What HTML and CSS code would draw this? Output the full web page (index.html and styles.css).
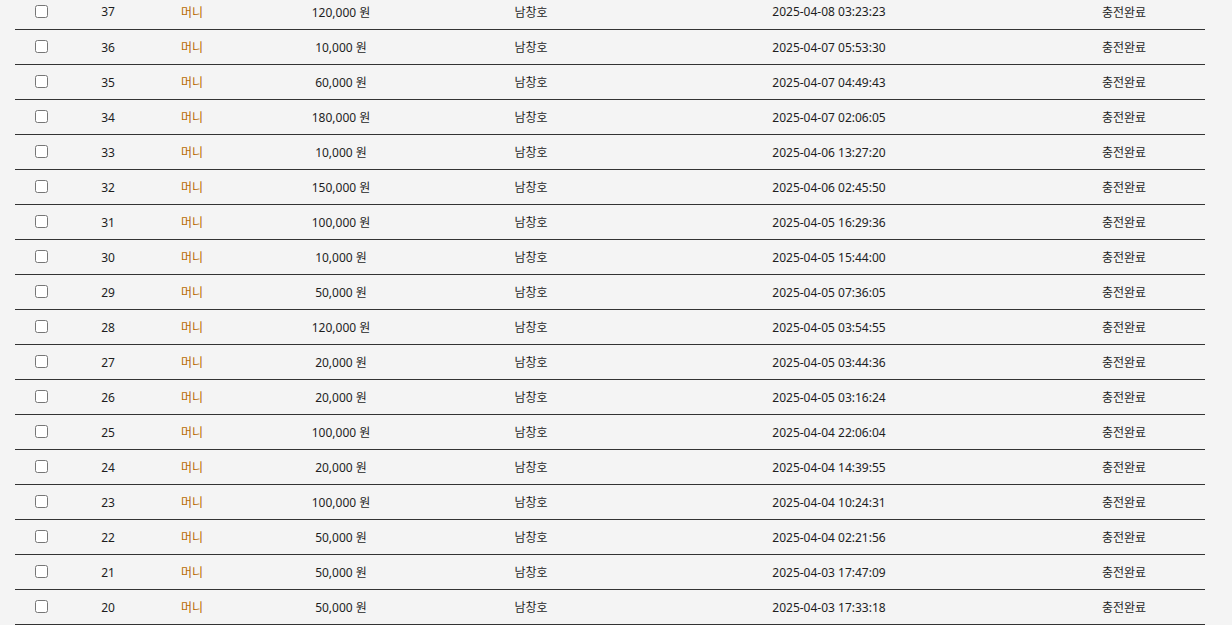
FILE: index.html
```html
<!DOCTYPE html>
<html lang="ko">
<head>
    <meta charset="UTF-8">
    <title>충전내역</title>
    <link rel="stylesheet" href="styles.css">
</head>
<body>
    <div class="list-wrap">
        <table class="charge-table">
            <colgroup>
                <col class="c-check">
                <col class="c-no">
                <col class="c-type">
                <col class="c-amount">
                <col class="c-name">
                <col class="c-date">
                <col class="c-state">
            </colgroup>
            <tbody id="chargeRows"></tbody>
        </table>
    </div>

    <script>
        const rows = [
            [37, '120,000', '2025-04-08 03:23:23'],
            [36, '10,000', '2025-04-07 05:53:30'],
            [35, '60,000', '2025-04-07 04:49:43'],
            [34, '180,000', '2025-04-07 02:06:05'],
            [33, '10,000', '2025-04-06 13:27:20'],
            [32, '150,000', '2025-04-06 02:45:50'],
            [31, '100,000', '2025-04-05 16:29:36'],
            [30, '10,000', '2025-04-05 15:44:00'],
            [29, '50,000', '2025-04-05 07:36:05'],
            [28, '120,000', '2025-04-05 03:54:55'],
            [27, '20,000', '2025-04-05 03:44:36'],
            [26, '20,000', '2025-04-05 03:16:24'],
            [25, '100,000', '2025-04-04 22:06:04'],
            [24, '20,000', '2025-04-04 14:39:55'],
            [23, '100,000', '2025-04-04 10:24:31'],
            [22, '50,000', '2025-04-04 02:21:56'],
            [21, '50,000', '2025-04-03 17:47:09'],
            [20, '50,000', '2025-04-03 17:33:18']
        ];

        const tbody = document.getElementById('chargeRows');
        rows.forEach(function(r) {
            const tr = document.createElement('tr');
            tr.innerHTML =
                '<td><input type="checkbox"></td>' +
                '<td>' + r[0] + '</td>' +
                '<td class="type">머니</td>' +
                '<td>' + r[1] + ' 원</td>' +
                '<td>남창호</td>' +
                '<td>' + r[2] + '</td>' +
                '<td>충전완료</td>';
            tbody.appendChild(tr);
        });
    </script>
</body>
</html>
```

FILE: styles.css
```css
* {
    margin: 0;
    padding: 0;
    box-sizing: border-box;
}

html, body {
    height: 100%;
    overflow: hidden;
    background-color: #f4f4f4;
    font-family: "Noto Sans", "Noto Sans CJK KR", sans-serif;
    font-size: 12px;
    color: #1e1e1e;
}

.list-wrap {
    padding: 0 27px 0 15px;
    margin-top: -6px;
}

.charge-table {
    width: 1190px;
    border-collapse: collapse;
    table-layout: fixed;
}

.c-check { width: 52px; }
.c-no { width: 82px; }
.c-type { width: 86px; }
.c-amount { width: 212px; }
.c-name { width: 168px; }
.c-date { width: 428px; }
.c-state { width: 162px; }

.charge-table td {
    height: 35px;
    padding-top: 1px;
    text-align: center;
    vertical-align: middle;
    border-bottom: 1px solid #333;
    white-space: nowrap;
}

.charge-table td.type {
    color: #b86a00;
}

.charge-table input[type="checkbox"] {
    width: 13px;
    height: 13px;
    margin: 0;
    vertical-align: middle;
    position: relative;
    top: -2px;
}
```
